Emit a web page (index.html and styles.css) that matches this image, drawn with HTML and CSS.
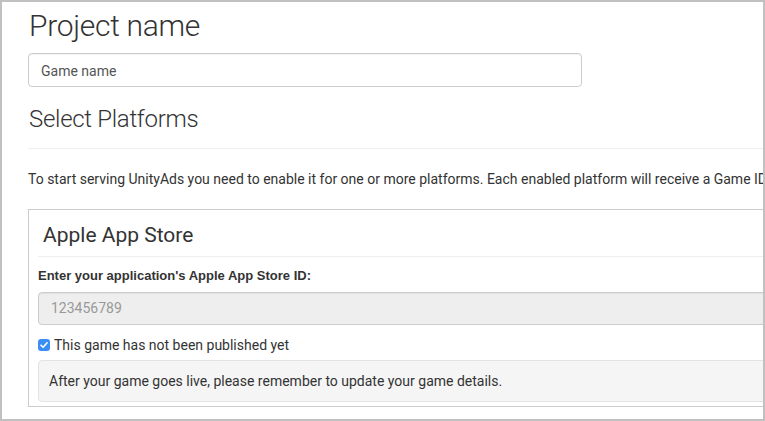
FILE: index.html
```html
<!DOCTYPE html>
<html>
<head>
<meta charset="utf-8">
<link rel="stylesheet" href="styles.css">
</head>
<body>
<div class="frame">
  <div class="content">
    <h1 class="title">Project name</h1>
    <div class="input">Game name</div>
    <h2 class="subtitle">Select Platforms</h2>
    <div class="rule"></div>
    <p class="intro">To start serving UnityAds you need to enable it for one or more platforms. Each enabled platform will receive a Game ID</p>
    <div class="panel">
      <h3 class="panel-title">Apple App Store</h3>
      <div class="rule inner"></div>
      <label class="field-label">Enter your application's Apple App Store ID:</label>
      <div class="input disabled">123456789</div>
      <div class="check-row">
        <span class="checkbox"><svg width="12" height="12" viewBox="0 0 12 12"><path d="M3 6.2 L5.1 8.3 L9.1 3.8" fill="none" stroke="#fff" stroke-width="1.6" stroke-linecap="round" stroke-linejoin="round"/></svg></span>
        <span>This game has not been published yet</span>
      </div>
      <div class="well">After your game goes live, please remember to update your game details.</div>
    </div>
  </div>
</div>
</body>
</html>
```
FILE: styles.css
```css
html, body {
  margin: 0;
  padding: 0;
  background: #fff;
}
.frame {
  width: 765px;
  height: 421px;
  box-sizing: border-box;
  border: 2px solid #c0c0c0;
  overflow: hidden;
  font-family: Roboto, "Liberation Sans", sans-serif;
  color: #333;
}
.content {
  width: 1000px;
  padding: 6px 0 0 26px;
  box-sizing: border-box;
}
.title {
  margin: 0;
  font-size: 30px;
  line-height: 36px;
  font-weight: 300;
  letter-spacing: -0.3px;
  color: #333;
  padding-left: 1px;
}
.input {
  margin-top: 9px;
  width: 554px;
  height: 34px;
  box-sizing: border-box;
  border: 1px solid #ccc;
  border-radius: 4px;
  padding: 7px 12px 5px 12px;
  font-size: 14px;
  line-height: 20px;
  color: #555;
  box-shadow: inset 0 1px 1px rgba(0,0,0,.06);
}
.subtitle {
  margin: 17px 0 0 0;
  font-size: 24px;
  line-height: 30px;
  font-weight: 300;
  letter-spacing: -0.3px;
  padding-left: 1px;
}
.rule {
  margin-top: 14px;
  height: 1px;
  background: #eee;
}
.intro {
  margin: 20px 0 0 0;
  font-size: 14px;
  line-height: 20px;
  white-space: nowrap;
}
.panel {
  margin-top: 20px;
  border: 1px solid #ccc;
  padding: 13px 9px 4px 9px;
}
.panel-title {
  margin: 0;
  padding-left: 5px;
  font-size: 21px;
  line-height: 24px;
  font-weight: 400;
}
.rule.inner {
  margin-top: 9px;
}
.field-label {
  display: block;
  margin-top: 9px;
  line-height: 20px;
  font-weight: 700;
  font-family: "Liberation Sans", Arial, sans-serif;
  font-size: 13px;
}
.input.disabled {
  margin-top: 6px;
  width: auto;
  height: 33px;
  background: #eee;
  color: #999;
  padding-top: 5px;
  padding-bottom: 5px;
}
.check-row {
  display: flex;
  align-items: center;
  gap: 4px;
  margin-top: 10px;
  font-size: 14px;
  line-height: 20px;
}
.checkbox {
  display: inline-flex;
  width: 12px;
  height: 12px;
  border-radius: 3px;
  background: #3a8ef6;
}
.well {
  margin-top: 5px;
  background: #f5f5f5;
  border: 1px solid #e3e3e3;
  border-radius: 4px;
  padding: 10px 10px;
  font-size: 14px;
  line-height: 20px;
}
```
